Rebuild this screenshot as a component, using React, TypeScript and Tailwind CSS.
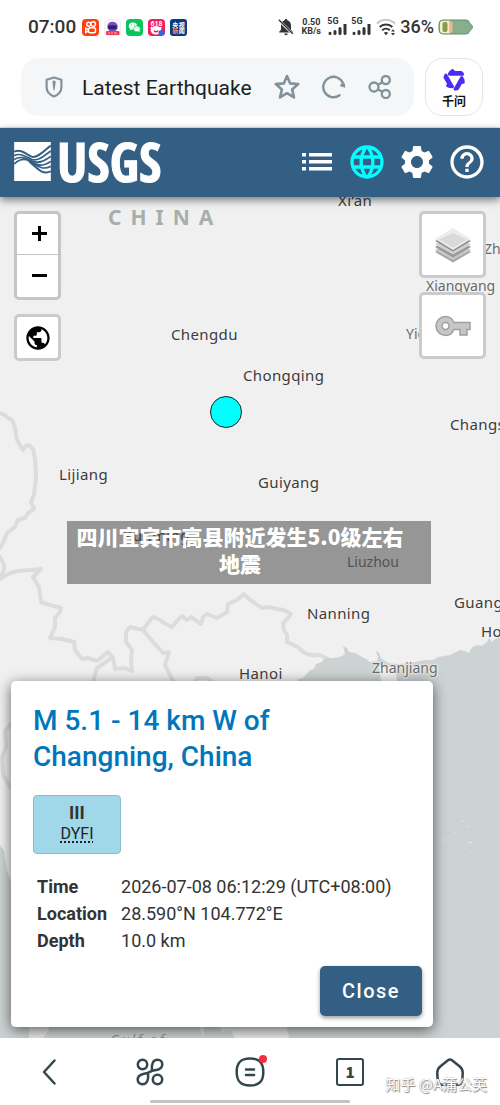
import React from "react";
import { MdHelpOutline, MdLanguage, MdPublic, MdSettings } from "react-icons/md";

function StatusBar() {
  return (
    <div className="flex h-[54px] items-center pl-7 pr-[27px] text-[#333]">
      <span className="text-[19px] font-medium leading-6">07:00</span>
      <div className="ml-[6px] flex items-center gap-[5px]">
        <svg viewBox="0 0 17 17" className="size-[17px]" aria-label="Kuaishou">
          <rect width="17" height="17" rx="4" fill="#fb4110" />
          <g fill="none" stroke="#fff" strokeWidth="1.4">
            <circle cx="6.7" cy="5.2" r="2" />
            <circle cx="11.2" cy="5" r="2.3" />
            <rect x="6.5" y="8.8" width="7" height="5" rx="1.8" />
            <path d="M6.3 10.6 3.7 9.2v4.3l2.6-1.3" />
          </g>
        </svg>
        <svg viewBox="0 0 17 17" className="size-[17px]" aria-label="Shopping">
          <rect x=".3" y=".3" width="16.4" height="16.4" rx="4" fill="#fafafa" stroke="#ddd" strokeWidth=".5" />
          <ellipse cx="8.5" cy="7.7" rx="5.2" ry="4.9" fill="#7a4cc4" />
          <rect x="4" y="6.2" width="9" height="4" rx="2" fill="#2e236c" />
          <rect x="2" y="12" width="13.5" height="4" rx="1" fill="#f2365c" />
          <path d="M4 14h2m1 0h2m1 0h3" stroke="#ffb3a0" strokeWidth="1" />
        </svg>
        <svg viewBox="0 0 17 17" className="size-[17px]" aria-label="WeChat">
          <rect width="17" height="17" rx="4" fill="#07c75c" />
          <ellipse cx="6.9" cy="7" rx="4.1" ry="3.5" fill="#fff" />
          <path d="m4.4 9-.4 2.3 2.4-1.2z" fill="#fff" />
          <ellipse cx="10.9" cy="9.9" rx="3.4" ry="2.9" fill="#fff" stroke="#07c75c" strokeWidth=".7" />
          <path d="m12.2 12.1 1.4 1.1-.2-1.9z" fill="#fff" />
          <g fill="#07c75c">
            <circle cx="5.6" cy="6" r=".5" />
            <circle cx="8.3" cy="6" r=".5" />
            <circle cx="9.9" cy="9.2" r=".4" />
            <circle cx="12" cy="9.2" r=".4" />
          </g>
        </svg>
        <svg viewBox="0 0 17 17" className="size-[17px]" aria-label="618">
          <rect width="17" height="17" rx="4" fill="#f51d5b" />
          <ellipse cx="8" cy="11.2" rx="5.3" ry="4.3" fill="#fff" />
          <path d="m3 8 1 3m9-3-1 3" stroke="#fff" strokeWidth="1.5" />
          <text x="8.5" y="6.8" textAnchor="middle" fontSize="7" fontWeight="700" fill="#fff" fontFamily="Roboto">618</text>
          <path d="M6 11.8q2 2 4 0" stroke="#e22" strokeWidth="1.3" fill="none" />
          <rect x="10.5" y="11.2" width="6" height="5" rx="1.5" fill="#2b6be0" />
        </svg>
        <svg viewBox="0 0 17 17" className="size-[17px]" aria-label="央视新闻">
          <rect width="17" height="17" rx="3" fill="#0b3a80" />
          <g fontSize="6" fontWeight="700" fill="#fff" fontFamily="Noto Sans CJK SC">
            <text x="2.3" y="7.7">央</text>
            <text x="8.8" y="7.7">视</text>
            <text x="2.3" y="14.2" fill="#ff9a6a">新</text>
            <text x="8.8" y="14.2">闻</text>
          </g>
        </svg>
      </div>
      <div className="ml-auto flex items-center">
        <svg viewBox="0 0 16 18" className="h-[18px] w-4" aria-label="Muted">
          <path d="M8 1c.9 0 1.3.5 1.3 1.3C11.8 3 13 5 13 7.5v4.2l1.8 2v.8H1.2v-.8l1.8-2V7.500C3 5 4.200 3 6.700 2.300 6.700 1.500 7.100 1 8 1ZM6.200 15.500h3.600a1.800 1.800 0 0 1-3.600 0Z" fill="#333" />
          <path d="m1 2.500 14 13.500" stroke="#fff" strokeWidth="2.500" />
          <path d="m.8 1.800 14 14" stroke="#333" strokeWidth="1.400" />
        </svg>
        <div className="ml-[7px] mr-[2px] flex w-5 flex-col items-center text-[9px] font-bold leading-[9px]">
          <span>0.50</span>
          <span>KB/s</span>
        </div>
        <Signal />
        <Signal />
        <svg viewBox="0 0 20 17" className="ml-[5px] h-[17px] w-5" fill="none">
          <path d="M1 4.500a13 13 0 0 1 18 0" stroke="#c4c4c4" strokeWidth="1.800" />
          <path d="M3.700 8a9 9 0 0 1 12.600 0" stroke="#333" strokeWidth="2.100" />
          <path d="M6.200 11.200a5.600 5.600 0 0 1 7.600 0" stroke="#333" strokeWidth="2.100" />
          <path d="m7.800 13.700 2.200 2.500 2.200-2.500q-2.200-1.500-4.400 0Z" fill="#333" />
          <path d="m15 12.500 2-2.300 2 2.300zm0 1.600 2 2.300 2-2.300z" fill="#333" />
        </svg>
        <span className="ml-1 text-[18px] font-medium leading-6">36%</span>
        <svg viewBox="0 0 35 16" className="ml-1 h-4 w-[35px]" aria-label="Battery 36%">
          <path d="M5 1h23q3 0 3.500 3l2.500 2.500q.8 1.500 0 3L31.500 12q-.5 3-3.500 3H5q-4 0-4-4V5q0-4 4-4Z" fill="#86ae8f" stroke="#668c6b" />
          <path d="M5 1.800h7v12.400H5q-3 0-3-3V5q0-3.200 3-3.200Z" fill="#f6efc9" />
          <rect x="4.500" y="3" width="5" height="10" rx="2" fill="#8a9c4b" />
          <rect x="11" y="2.500" width="3.500" height="11" fill="#f0b98a" />
        </svg>
      </div>
    </div>
  );
}

function Signal() {
  return (
    <div className="ml-1 flex w-5 flex-col">
      <span className="h-[6px] text-[9px] font-bold leading-[6px]">5G</span>
      <svg viewBox="0 0 20 12" className="h-3 w-5" stroke="#333" strokeWidth="3" strokeLinecap="round">
        <path d="M3 9.300v.2M8 7.500v2M13 4.500v5M18 .5v9" />
      </svg>
    </div>
  );
}

function AddressBar() {
  return (
    <div className="mt-1 mb-[11px] flex gap-[11px] pl-[21px] pr-[17px]">
      <div className="flex h-[58px] min-w-0 flex-1 items-center rounded-[18px] bg-[#f4f6f8] pl-6 pr-[22px] text-[#80929c]">
        <svg viewBox="0 0 20 24" className="h-6 w-[18px] shrink-0" fill="none">
          <path d="M10 1.500 18.200 4v8.500c0 4.500-3.500 8-8.200 10-4.700-2-8.200-5.500-8.200-10V4Z" stroke="currentColor" strokeWidth="2.400" strokeLinejoin="round" />
          <path d="M10 4.500 12 6l-1.400 9.500H9.400L8.200 6Z" fill="currentColor" />
        </svg>
        <input
          aria-label="Address"
          readOnly
          value="Latest Earthquake"
          className="ml-[19px] w-0 min-w-0 flex-1 bg-transparent pt-[2px] text-[21px] leading-7 text-[#1c1f22] outline-none"
        />
        <div className="ml-2 flex shrink-0 items-center gap-[22px]">
          <button type="button" aria-label="Bookmark">
            <svg viewBox="0 0 26 26" className="size-[26px]" fill="none" stroke="currentColor" strokeWidth="2.600" strokeLinejoin="round">
              <path d="m13 2 3.200 7.400 8 .7-6.100 5.300 1.900 8L13 19.200 6 23.400l1.900-8L1.800 10.100l8-.7Z" />
            </svg>
          </button>
          <button type="button" aria-label="Reload">
            <svg viewBox="0 0 24 24" className="size-6" fill="none">
              <path d="M17.500 20.300A10.200 10.200 0 1 1 21.200 9" stroke="currentColor" strokeWidth="2.400" strokeLinecap="round" />
              <path d="m18 10.500 4-2.500.9 4.200Z" fill="currentColor" stroke="currentColor" strokeLinejoin="round" />
            </svg>
          </button>
          <button type="button" aria-label="Share">
            <svg viewBox="0 0 24 24" className="size-6" fill="none" stroke="currentColor" strokeWidth="2.300">
              <circle cx="6" cy="12" r="4.500" />
              <circle cx="17.800" cy="5" r="4" />
              <circle cx="17.800" cy="19" r="4" />
              <path d="m10 9.800 4.500-2.600M10 14.300l4.500 2.600" />
            </svg>
          </button>
        </div>
      </div>
      <button type="button" className="flex size-[58px] shrink-0 flex-col items-center rounded-[18px] border border-[#e2e5e8] pt-[9px] font-['Noto_Sans_CJK_SC',sans-serif] text-[12px] font-bold leading-4 text-[#111]">
        <svg viewBox="0 0 24 24" className="mb-[2px] size-[23px]" fill="#4b2df2" stroke="#4b2df2" strokeWidth="3" strokeLinejoin="round">
          <path d="M8 4 10 2.500 11.500 4.500H19L20.500 6.500H6.500Z" />
          <path d="M8 4 10 2.500 11.500 4.500H19L20.500 6.500H6.500Z" transform="rotate(120 12 12)" />
          <path d="M8 4 10 2.500 11.500 4.500H19L20.500 6.500H6.500Z" transform="rotate(240 12 12)" />
        </svg>
        千问
      </button>
    </div>
  );
}

function Header() {
  return (
    <header className="relative z-20 flex h-[69px] items-center justify-between bg-[#335f84] pb-[2px] pl-[14px] pr-[13px] text-white shadow-[0_3px_8px_rgba(0,0,0,0.5)]">
      <a href="#home" aria-label="USGS" className="flex items-center gap-[6px]">
        <svg viewBox="0 0 110 117" className="h-[39px] w-[37px]">
          <rect width="110" height="117" fill="#fff" />
          <g fill="none" stroke="#335f84" strokeWidth="5">
            <path d="M0 29C20 20 36 36 52 44 72 50 92 22 110 11" strokeWidth="6" />
            <path d="M0 41C18 31 34 44 52 52 74 60 92 38 110 27" />
            <path d="M0 53C16 41 34 48 52 56 74 68 94 54 110 43" />
            <path d="M0 66C18 48 34 48 52 59 72 76 94 69 110 58" />
            <path d="M40 55C66 66 80 88 110 73" />
            <path d="M46 59C68 78 84 100 110 88" strokeWidth="6" />
          </g>
        </svg>
        <span className="font-['Liberation_Sans_Narrow','Noto_Sans_ExtraCondensed','Open_Sans_Condensed','Liberation_Sans',sans-serif] text-[54px] font-bold leading-[52px] [-webkit-text-stroke:1px_#fff] pb-[2px]">USGS</span>
      </a>
      <nav className="flex items-center gap-[10px]">
        <button type="button" aria-label="List" className="flex size-10 items-center justify-center">
          <svg viewBox="0 0 30 18" className="h-[18px] w-[30px]" fill="currentColor">
            <path d="M0 0h4v3.500H0zM7 0h23v3.500H7zM0 7h4v3.500H0zM7 7h23v3.500H7zM0 14h4v3.500H0zM7 14h23v3.500H7z" />
          </svg>
        </button>
        <button type="button" aria-label="Map" className="text-[#0ff]"><MdLanguage size={40} /></button>
        <button type="button" aria-label="Settings"><MdSettings size={40} /></button>
        <button type="button" aria-label="Help"><MdHelpOutline size={40} /></button>
      </nav>
    </header>
  );
}

function BaseMap() {
  return (
    <svg viewBox="0 0 500 841" preserveAspectRatio="xMinYMin slice" className="absolute inset-0 h-full w-full" aria-hidden="true">
      <rect width="500" height="841" fill="#f0f0f0" />
      <g fill="none" stroke="#dcdddb" strokeWidth="4" strokeLinejoin="round" strokeLinecap="round">
        <path d="M0 216 5 218 8 221 12 223 15 231 17 243 20 248 23 253 26 249 29 248 33 252 35 261 36 281 34 298 31 305 34 312 28 316 25 321 18 323 15 330 7 336 3 346 0 351" />
        <path d="M0 360 4 368 4 373 0 382 8 377 17 374 30 373 41 372 33 380 36 385 39 390 41 405 50 408 61 411 60 415 55 421 55 430 50 441 62 442 74 445 75 453 82 462 88 461 97 464 108 455 113 461 115 472 125 471 132 474 131 461 132 453 126 445 126 435 130 430 143 433 148 426 153 420 160 423 166 427 172 430 177 424 182 419 187 423 191 420 201 427 203 420 207 417 217 421 227 415 228 407 237 403 244 397 250 403 262 411 270 410 277 412 284 413 291 417 288 421 283 426 284 433 287 438 287 445 298 450 303 455 310 458 320 458 328 462" />
        <path d="m143 433 10 12 10 11 6-1-4 13 6 12 6 10M110 462 97 471 92 488M193 488l4-7 10 0 10 7" />
        <path d="M12 526 5 534l1 16-4 10 1 18 7 12" />
      </g>
      <path d="M296 488 298 482 303 481 310 473 314 472 316 467 322 465 325 461 333 461 340 460 345 457 343 449 347 451 349 455 355 456 362 460 366 462 370 465 377 464 378 460 376 454 379 456 381 461 388 466 398 467 410 466 425 463 433 463 438 460 450 458 456 455 460 453 465 454 469 456 472 450 478 448 482 449 487 445 489 441 492 445 495 442 500 440V841H296Z" fill="#cdd3d3" />
      <path d="M379 470h16l3 20h-16Z" fill="#f0f0f0" />
      <path d="M0 648 4 654l3 20 4 10v157H0Z" fill="#cdd3d3" />
      <path d="M5 830h310v11H5Z" fill="#cdd3d3" />
      <path d="M29 826h19l1 7-6 8H29ZM199 830h5l-1 9ZM218 828h68l3 13h-54l-4-7-9 1Z" fill="#e6e8e8" />
      <g fill="#e6e9e9">
        <path d="m441 643 3-1v2zM454 635l3-1-1 2zM468 645h5v1h-5zM470 654h2v1zM462 623h1v2h-1zM466 629h4v1z" />
      </g>
    </svg>
  );
}

const CITY = "text-[15px] tracking-wide text-[#3c3c3c]";
const TOWN = "text-[14px] text-[#6a6a6a]";

const places = [
  { name: "Xi’an", pos: "left-[338px] top-[-8px]", tone: CITY },
  { name: "Zh", pos: "left-[484px] top-[41px]", tone: TOWN },
  { name: "Xiangyang", pos: "left-[426px] top-[78px]", tone: TOWN },
  { name: "Yichang", pos: "left-[406px] top-[126px]", tone: TOWN },
  { name: "Chengdu", pos: "left-[171px] top-[126px]", tone: CITY },
  { name: "Chongqing", pos: "left-[243px] top-[167px]", tone: CITY },
  { name: "Changsha", pos: "left-[450px] top-[216px]", tone: CITY },
  { name: "Lijiang", pos: "left-[59px] top-[266px]", tone: CITY },
  { name: "Guiyang", pos: "left-[258px] top-[274px]", tone: CITY },
  { name: "Kunming", pos: "left-[123px] top-[327px]", tone: CITY },
  { name: "Liuzhou", pos: "left-[347px] top-[354px]", tone: TOWN },
  { name: "Nanning", pos: "left-[307px] top-[405px]", tone: CITY },
  { name: "Guangzhou", pos: "left-[454px] top-[394px]", tone: CITY },
  { name: "Hong Kong", pos: "left-[481px] top-[423px]", tone: CITY },
  { name: "Hanoi", pos: "left-[239px] top-[465px]", tone: CITY },
  { name: "Zhanjiang", pos: "left-[372px] top-[460px]", tone: TOWN },
];

function MapLabels() {
  return (
    <div className="absolute inset-0 overflow-hidden whitespace-nowrap font-['Noto_Sans',sans-serif]">
      <span className="absolute left-[108px] top-[6px] text-[21px] font-bold leading-7 tracking-[9px] text-[#a8aeab]">CHINA</span>
      {places.map((p) => (
        <span key={p.name} className={`absolute leading-[22px] [text-shadow:0_0_2px_#f4f4f4,0_0_2px_#f4f4f4,0_0_3px_#f4f4f4] ${p.pos} ${p.tone}`}>
          {p.name}
        </span>
      ))}
      <span className="absolute left-[110px] top-[832px] text-[14px] italic leading-[22px] tracking-[2px] text-[#8a9494]">Gulf of</span>
      <button type="button" aria-label="M 5.1 earthquake" className="absolute left-[210px] top-[199px] size-8 rounded-full border border-[#222] bg-[#0ff]" />
    </div>
  );
}

function MapControls() {
  return (
    <div className="relative flex justify-between px-[14px] pt-[14px] text-black">
      <div className="flex flex-col gap-[14px]">
        <div className="flex w-[47px] flex-col rounded-[5px] border-[3px] border-[#c5c5c5] bg-white">
          <button type="button" aria-label="Zoom in" className="flex h-[41px] items-center justify-center border-b border-[#c5c5c5] pb-[2px] pl-[3px]">
            <svg viewBox="0 0 15 15" className="size-[15px]"><path d="M7.500 0v15M0 7.500h15" stroke="#000" strokeWidth="3" /></svg>
          </button>
          <button type="button" aria-label="Zoom out" className="flex h-[42px] items-center justify-center pb-[2px] pl-[3px]">
            <svg viewBox="0 0 15 15" className="size-[15px]"><path d="M0 7.500h15" stroke="#000" strokeWidth="3" /></svg>
          </button>
        </div>
        <button type="button" aria-label="World" className="flex size-[47px] items-center justify-center rounded-[5px] border-[3px] border-[#cbcbcb] bg-white">
          <MdPublic size={28} />
        </button>
      </div>
      <div className="flex flex-col gap-[14px]">
        <button type="button" aria-label="Layers" className="flex size-[67px] items-center justify-center rounded-[5px] border-[3px] border-[#cbcbcb] bg-white">
          <svg viewBox="0 0 38 36" className="h-9 w-[38px]">
            <path d="m1 25 18-10 18 10-18 10.500Z" fill="#a6a6a6" />
            <path d="m1 23 18-10 18 10-18 10Z" fill="#c8c8c8" />
            <path d="m1 20 18-10 18 10-18 10.500Z" fill="#989898" />
            <path d="m1 17.500 18-10 18 10-18 10Z" fill="#d0d0d0" />
            <path d="m1 14 18 10.500L37 14 19 6Z" fill="#8c8c8c" />
            <path d="m1 12 18-11 18 11-18 11Z" fill="#ececec" />
            <path d="m5 12.500 14-6.500 14 6.500-14 8.500Z" fill="#dadada" />
          </svg>
        </button>
        <button type="button" aria-label="Legend" className="flex size-[67px] items-center justify-center rounded-[5px] border-[3px] border-[#cbcbcb] bg-white">
          <svg viewBox="0 0 36 22" className="h-[22px] w-9">
            <path fillRule="evenodd" d="M10.500 1.500c4 0 7 2.300 8.300 6H35v7h-3v5.500h-7v-5.500h-6.200c-1.300 3.700-4.300 6-8.300 6C5.200 20.500 1 16.300 1 11s4.200-9.500 9.500-9.500Zm0 6a3.500 3.500 0 1 0 0 7 3.500 3.500 0 0 0 0-7Z" fill="#c6c6c6" stroke="#a0a0a0" strokeWidth="1.500" />
          </svg>
        </button>
      </div>
    </div>
  );
}

const facts = [
  ["Time", "2026-07-08 06:12:29 (UTC+08:00)"],
  ["Location", "28.590°N 104.772°E"],
  ["Depth", "10.0 km"],
];

function EventCard() {
  return (
    <section className="relative z-10 mx-[11px] mt-auto mb-[11px] max-w-[422px] rounded-[5px] bg-white px-[11px] pt-[22px] pb-[11px] shadow-[0_3px_14px_rgba(0,0,0,0.6)]">
      <div className="pl-[11px]">
        <h2 className="max-w-[300px] text-[28px] font-medium leading-9">
          <a href="#event" className="text-[#0076bd]">M 5.1 - 14 km W of Changning, China</a>
        </h2>
        <a href="#dyfi" className="mt-5 flex h-[59px] w-[88px] flex-col items-center rounded-[4px] border border-[#8cbcca] bg-[#a0d8e9] pt-[6px] text-[#222]">
          <span className="text-[18px] font-bold leading-[22px] text-[#333]">III</span>
          <abbr title="Did You Feel It?" className="text-[16px] leading-[19px] underline decoration-dotted decoration-2 underline-offset-2">DYFI</abbr>
        </a>
        <table className="mt-[19px] text-left text-[18px] leading-[27px] text-[#333]">
          <tbody>
            {facts.map(([k, v]) => (
              <tr key={k}>
                <th scope="row" className="pl-1 pr-[14px] font-bold">{k}</th>
                <td>{v}</td>
              </tr>
            ))}
          </tbody>
        </table>
      </div>
      <div className="mt-3 flex justify-end">
        <button type="button" className="h-[50px] rounded-[5px] bg-[#335f84] px-[22px] text-[20px] font-medium tracking-[1.5px] text-white shadow-[0_2px_4px_rgba(0,0,0,0.4)]">Close</button>
      </div>
    </section>
  );
}

function BottomBar() {
  return (
    <footer className="relative flex flex-col bg-white text-[#34464d]">
      <nav className="grid h-[62px] grid-cols-5 items-center pt-[5px]">
        <button type="button" aria-label="Back" className="flex justify-center">
          <svg viewBox="0 0 28 28" className="size-7" fill="none" stroke="currentColor" strokeWidth="2.500" strokeLinecap="round" strokeLinejoin="round"><path d="M18.500 2.500 8 14l10.500 11.500" /></svg>
        </button>
        <button type="button" aria-label="Tools" className="flex justify-center">
          <svg viewBox="0 0 28 28" className="size-7" fill="none" stroke="currentColor" strokeWidth="2.500" strokeLinejoin="round">
            <circle cx="6.500" cy="6.500" r="4.700" />
            <circle cx="21.500" cy="21.500" r="4.700" />
            <path d="M16 12.500c-.8-6.500 1-10.700 5.500-10.700 3 0 4.800 2 4.800 4.600 0 4-3.300 5.300-7.500 5.900-5.500.8-4.300 2.400-9.600 3.200-4.200.6-7.500 2-7.500 6.100 0 2.600 1.800 4.600 4.800 4.600 4.500 0 6.300-4.200 5.500-10.700" />
          </svg>
        </button>
        <button type="button" aria-label="Menu" className="flex justify-center">
          <span className="relative">
            <svg viewBox="0 0 30 30" className="size-[30px]" fill="none" stroke="currentColor" strokeWidth="2.500" strokeLinecap="round">
              <path d="M15 1.500c9.500 0 13.300 4.200 13.300 13.500S24.500 28.500 15 28.500 1.700 24.300 1.700 15 5.500 1.500 15 1.500Z" />
              <path d="M11 12.500h8M11 18h8" />
            </svg>
            <span className="absolute -right-[2px] -top-[2px] size-2 rounded-full bg-[#fb2c3c]" />
          </span>
        </button>
        <button type="button" aria-label="Tabs" className="flex justify-center">
          <span className="flex size-7 items-center justify-center rounded-[3px] border-2 border-[#34464d] font-['Noto_Sans_CJK_SC',sans-serif] text-[15px] font-black leading-5">1</span>
        </button>
        <button type="button" aria-label="Home" className="flex justify-center">
          <svg viewBox="0 0 28 28" className="size-7" fill="none" stroke="currentColor" strokeWidth="2.500" strokeLinejoin="round">
            <path d="M12 2.200q2-1.400 4 0l7.500 6q3.200 2.600 3.200 6.500 0 12-4.500 12H5.800q-4.500 0-4.500-12 0-3.900 3.200-6.500Z" />
          </svg>
        </button>
      </nav>
      <div className="mx-auto mb-[2px] h-[3px] w-2/5 rounded-full bg-[#c3c3c3]" />
      <span className="absolute right-[13px] top-[36px] whitespace-nowrap font-['Noto_Sans_CJK_SC',sans-serif] text-[15px] leading-5 text-white [text-shadow:1px_1px_1px_#888,0_0_1px_#888]">知乎 @A蒲公英</span>
    </footer>
  );
}

export default function App() {
  return (
    <div className="flex min-h-screen flex-col bg-white font-['Roboto',sans-serif]">
      <StatusBar />
      <AddressBar />
      <div className="h-px bg-[#dfe5ea]" />
      <Header />
      <main className="relative flex flex-1 flex-col overflow-hidden">
        <BaseMap />
        <MapLabels />
        <MapControls />
        <div className="absolute left-[67px] top-[324px] w-[364px] bg-[rgba(60,60,60,0.5)] pt-[2px] pr-[18px] pb-[7px] text-center font-['Noto_Sans_CJK_SC',sans-serif] text-[21px] font-black leading-[27px] text-white">
          四川宜宾市高县附近发生5.0级左右地震
        </div>
        <EventCard />
      </main>
      <BottomBar />
    </div>
  );
}
